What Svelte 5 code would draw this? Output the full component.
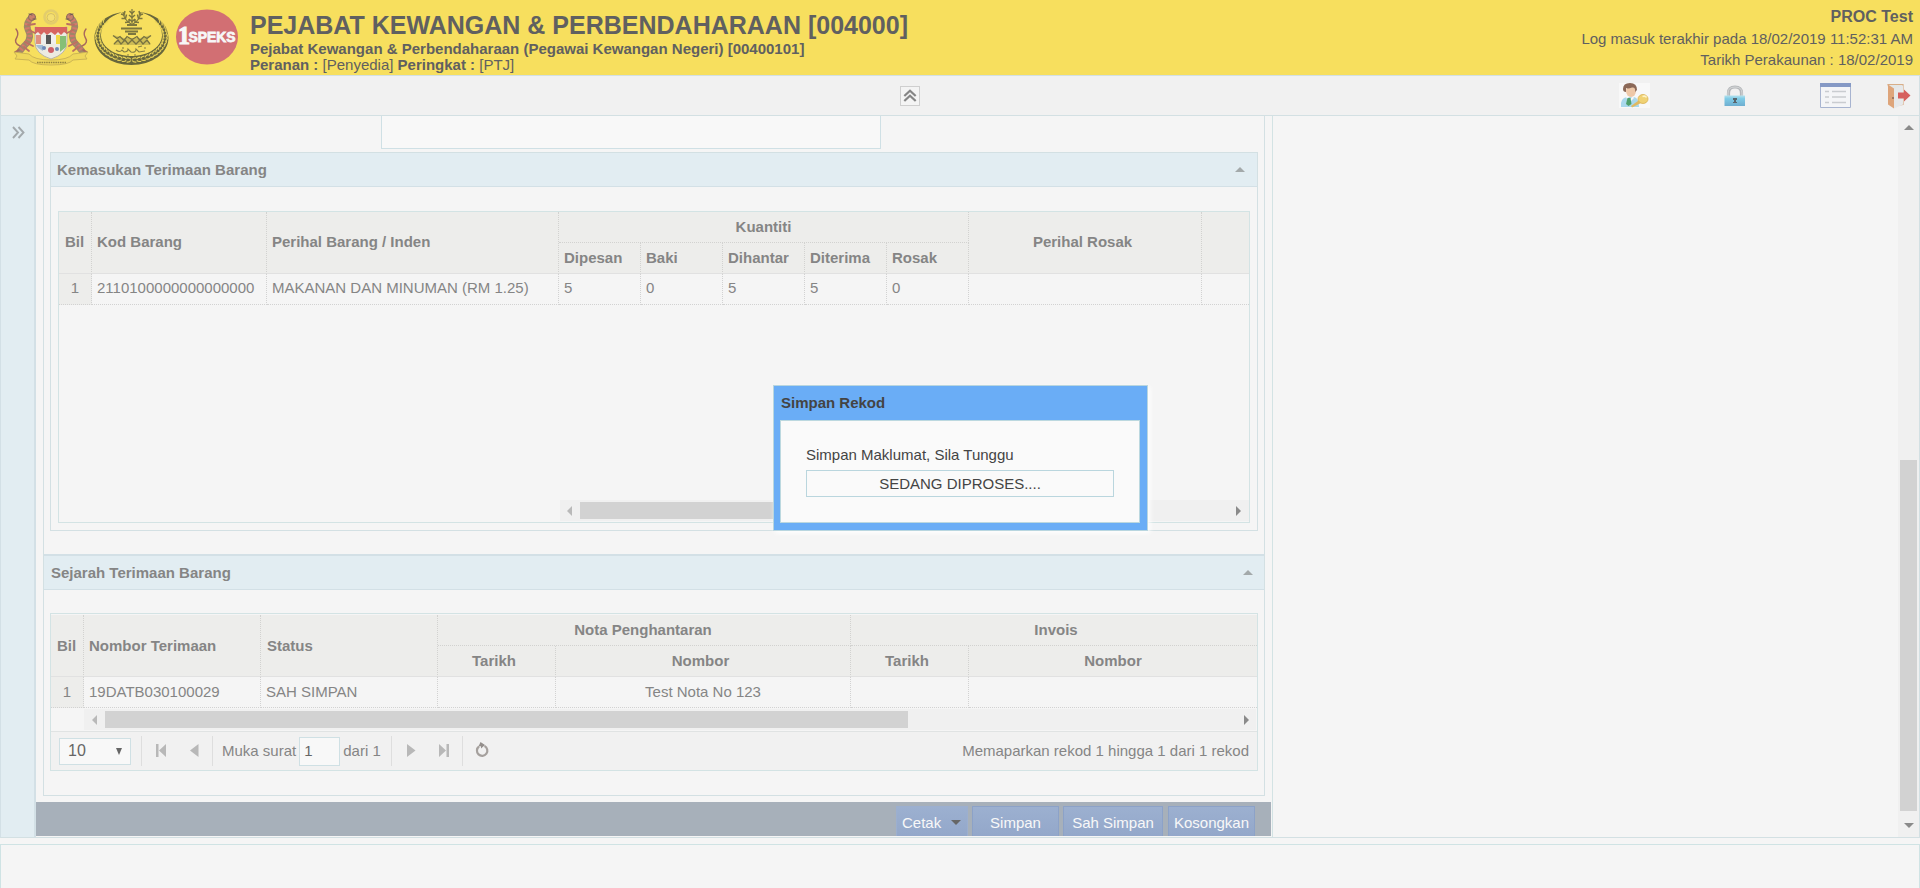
<script>
  const qty = ['Dipesan', 'Baki', 'Dihantar', 'Diterima', 'Rosak'];
  const qtyValues = ['5', '0', '5', '5', '0'];
  const sides = ['matrix(1 0 0 1 0 0)', 'matrix(-1 0 0 1 76 0)'];
  const leaves = Array.from({ length: 34 }, (_, i) => {
    const deg = -38 + (i * 256) / 33;
    const a = deg * (Math.PI / 180);
    return {
      x: 37.5 + 33.8 * Math.cos(a),
      y: 27.3 + 23.8 * Math.sin(a),
      r: deg + 90,
      flip: deg < 90 ? 1 : -1
    };
  });
</script>

<div class="page">
  <header>
    <div class="logos">
      <svg width="76" height="58" viewBox="0 0 76 58">
        <circle cx="38" cy="8" r="6.500" fill="none" stroke="#e3cd6c" stroke-width="2.600" />
        <circle cx="38" cy="8.500" r="4" fill="#f4df72" stroke="#cdb767" stroke-width=".8" />
        <path d="M22 18q16 4 32 0v15q0 12-16 17q-16-5-16-17z" fill="#ecebe2" stroke="#b9b5a5" />
        <path d="M22 18h32v7l-3-2-3 3-3-3-3 3-4-3-4 3-3-3-3 3-3-3-3 2z" fill="#d76560" />
        <path d="M23 26h5v9h-5z" fill="#e09080" /><path d="M29 26h4v9h-4z" fill="#eeeeec" />
        <path d="M33 26h5v9h-5z" fill="#575757" /><path d="M38 26h5v9h-5z" fill="#f0eeee" />
        <path d="M43 26h4v9h-4z" fill="#f1d944" /><path d="M47 27h6v11l-6 5z" fill="#86bf76" />
        <path d="M23 36h7v6l-5-3z" fill="#a5bdd4" /><circle cx="38" cy="41" r="3" fill="#ce6069" />
        <circle cx="44" cy="40" r="2" fill="#6d89b6" /><circle cx="31" cy="39" r="2" fill="#6d89b6" />
        {#each sides as side}
          <g fill="none" stroke-linecap="round" transform={side}>
            <path d="M19 8q-7 6-4 13q4 7-1 13q-4 4-7 8" stroke="#a08668" stroke-width="6.500" />
            <path d="M19 8q-7 6-4 13q4 7-1 13q-4 4-7 8" stroke="#d4796c" stroke-width="4.600" stroke-dasharray="1.800 2.200" stroke-linecap="butt" />
            <path d="M15 16l7-1M16 21l6 3M12 33l8 4M11 38l5 4" stroke="#bb7062" stroke-width="1.800" />
            <path d="M7 37q-7-3-3-9q2-4-1-8M2 43l4-2" stroke="#a8685c" stroke-width="1.400" />
            <circle cx="19" cy="8" r="3.500" fill="#c9806a" stroke="#8b6a5c" stroke-width=".9" />
            <path d="M16 5l3 1M20 10l3 0" stroke="#6b5a52" stroke-width="1" />
          </g>
        {/each}
        <path d="M1 43l15 2q5 6 22 6t22-6l15-2-3 4 2 3-14 1q-4 5-22 5t-22-5l-14-1 2-3z" fill="#efd75b" stroke="#c7b054" stroke-width=".9" />
        <path d="M24 53.500h29" stroke="#94843f" stroke-width="1.600" stroke-dasharray="1.500 .8" />
      </svg>
      <svg width="76" height="58" viewBox="0 0 76 58">
        <path
          d="M28 3.200C11 5.500.5 16 .5 29c0 15 16.500 27 37 27s37-12 37-27C74.500 16 64 5.500 47 3.200C60 7 68 15.500 68 26c0 11.500-13 21-30.500 21S7 37.500 7 26C7 15.500 15 7 28 3.200z"
          fill="#68673c"
        />
        {#each leaves as leaf}
          <path
            d="M-2.500-2.200Q.8-2.200 1.600-.4M-2.500 2Q.8 2.500 1.600 .8" fill="none" stroke="#e8d258" stroke-width="1.100"
            transform="translate({leaf.x} {leaf.y}) rotate({leaf.r}) scale({leaf.flip} 1)"
          />
        {/each}
        <g fill="none" stroke="#7d773f">
          <path d="M38 0v15M29 3q1 8 8 12M47 3q-1 8-8 12" stroke-width="1.200" />
          <path d="M35.500 2l2.500 2.500L40.500 2M35 6l3 2.500L41 6M35 10l3 2.500 3-2.500M27 5l3 1 1-4M27.500 9.500l4 0 1-4M49 5l-3 1-1-4M48.500 9.500l-4 0-1-4M31 13.500l4-.5v-3M45 13.500l-4-.5v-3" stroke-width="1.500" />
          <path d="M33 16h10M27 19.500h21M31 22.500h13M34 25h8" stroke-width="2" />
        </g>
        <path d="M19 26l5 5-5 5h38l-5-5 5-5-11 3H30z" fill="#cdbc55" />
        <path d="M19 26.500l4 3 3-2 4 4 3-4 5 3 5-3 3 4 4-4 3 2 4-3M20 35l4-4 3 4 4-4 3 4 4-4 4 4 4-4 3 4 4-4 3 4" fill="none" stroke="#777241" stroke-width="1.300" />
        <path d="M22 41q4 3 6 0l2 2q4 0 4-3l3 3q5 1 5-3l3 3 6-1M29 38v2M44 38l4-1M33 46h2M40 46h2M50 39h2" fill="none" stroke="#857e43" stroke-width="1.100" />
      </svg>
      <svg width="64" height="58" viewBox="0 0 64 58">
        <ellipse cx="31" cy="28" rx="31" ry="27.500" fill="#d26f73" />
        <path d="M3 22q4-1 5-4h3v14h2v3H3v-3h3v-9H3z" fill="#d26f73" />
        <text x="2" y="35" font-family="Liberation Serif" font-size="25" font-weight="bold" fill="#f7f7f7" stroke="#f7f7f7" stroke-width="1.200" textLength="12" lengthAdjust="spacingAndGlyphs">1</text>
        <text x="12.500" y="33" font-size="14" font-weight="bold" fill="#f7f7f7" stroke="#f7f7f7" stroke-width=".8" textLength="47" lengthAdjust="spacingAndGlyphs">SPEKS</text>
      </svg>
    </div>
    <div class="office">
      <h1>PEJABAT KEWANGAN &amp; PERBENDAHARAAN [004000]</h1>
      <div class="unit">Pejabat Kewangan &amp; Perbendaharaan (Pegawai Kewangan Negeri) [00400101]</div>
      <div class="role"><b>Peranan :</b> [Penyedia] <b>Peringkat :</b> [PTJ]</div>
    </div>
    <div class="session">
      <b>PROC Test</b>
      <span>Log masuk terakhir pada 18/02/2019 11:52:31 AM</span>
      <span>Tarikh Perakaunan : 18/02/2019</span>
    </div>
  </header>

  <nav>
    <button class="collapse" aria-label="Tutup">
      <svg width="18" height="18" viewBox="0 0 18 18"><path d="M3.300 9L9 3.800 14.700 9M3.300 14L9 8.800l5.700 5.200" fill="none" stroke="#858585" stroke-width="2.200" /></svg>
    </button>
    <div class="tools">
      <svg width="31" height="25" viewBox="0 0 31 25">
        <path d="M0 0h31v25H0z" fill="#f8f8f8" />
        <path d="M2 24q-1-9 6-10h7q5 1 5 10z" fill="#a9d8ec" /><path d="M8 13l3 3 3-3 1 2-3 3-5-3z" fill="#f8f8f8" />
        <path d="M8.500 15h3l1 6-3 2-2.500-2z" fill="#4fa06c" />
        <ellipse cx="12" cy="8" rx="5" ry="6" fill="#eec8a8" />
        <path d="M4 6Q4 0 11 0q7 0 7 7l-2 2q1-5-3-4.500Q9 6 7 5v4Q4 9 4 6z" fill="#8b6857" />
        <path d="M12 23l9-6.500 3 2.500-7 3.500-4 2z" fill="#e0b962" />
        <ellipse cx="24" cy="16" rx="5" ry="4.500" fill="#f0d274" stroke="#d9b354" stroke-width=".8" />
        <path d="M23.500 13.500q3-1 4 1" stroke="#fff3c4" stroke-width="1.600" fill="none" />
      </svg>
      <svg width="22" height="22" viewBox="0 0 22 22">
        <path d="M4.500 11V8q0-6 6.500-6t6.500 6v3" fill="none" stroke="#b4b7ba" stroke-width="3.200" />
        <path d="M4 11V8q0-6 7-6t7 6v3" fill="none" stroke="#d6d8d9" stroke-width="1" />
        <defs><linearGradient id="lock" x2="0" y2="1"><stop stop-color="#b4e2ee" /><stop offset=".3" stop-color="#7fcbe6" /><stop offset="1" stop-color="#6eaed0" /></linearGradient></defs>
        <rect x=".5" y="10.500" width="20.500" height="10.500" fill="url(#lock)" /><path d="M9 13h4v2h-1v2h1v1H9v-1h1v-2H9z" fill="#59666d" />
      </svg>
      <svg width="31" height="25" viewBox="0 0 31 25">
        <path d="M.5.5h30v24H.5z" fill="#f4f5f7" stroke="#a8b4d0" /><path d="M0 0h31v4H0z" fill="#8599c5" />
        <path d="M5 8.500h4M12 8.500h14M5 14h4M12 14h14M5 19.500h4M12 19.500h14" stroke="#c9ccd0" stroke-width="1.500" />
      </svg>
      <svg width="25" height="25" viewBox="0 0 25 25">
        <path d="M1 .5h15v20l-9 1z" fill="#e4e7e6" stroke="#d8ae88" stroke-width="1.200" />
        <path d="M1 .5l6 4v20l-6-4z" fill="#dea57b" /><path d="M7 4.500l9-3v19l-9 4z" fill="#e6e8ea" /><circle cx="6" cy="14" r="1" fill="#8a6958" />
        <path d="M11 8.500h6V5.500l6.500 6-6.500 6v-3h-6z" fill="#d6605e" />
      </svg>
    </div>
  </nav>

  <main>
    <aside><svg width="14" height="15" viewBox="0 0 14 15"><path d="M1 2l5 5.500-5 5.500M6.500 2l5 5.500-5 5.500" fill="none" stroke="#a3a9ac" stroke-width="1.900" /></svg></aside>
    <section class="pane">
      <div class="form">
        <div class="field"></div>
        <div class="panel">
          <h2><span>Kemasukan Terimaan Barang</span><i class="tri up"></i></h2>
          <div class="panel-body">
            <div class="grid first">
              <b class="tall mid k">Bil</b><b class="tall">Kod Barang</b><b class="tall">Perihal Barang / Inden</b>
              <b class="group mid">Kuantiti</b><b class="tall mid shift">Perihal Rosak</b><b class="tall last"></b>
              {#each qty as q}<b class="sub">{q}</b>{/each}
              <span class="num">1</span><span class="code">2110100000000000000</span><span>MAKANAN DAN MINUMAN (RM 1.25)</span>
              {#each qtyValues as v}<span>{v}</span>{/each}
              <span></span><span class="last"></span>
            </div>
            <div class="hscroll one"><i class="tri left"></i><div class="thumb"></div><i class="tri right"></i></div>
          </div>
        </div>

        <div class="history">
          <h2><span>Sejarah Terimaan Barang</span><i class="tri up"></i></h2>
          <div class="table-two">
            <div class="grid second">
              <b class="tall mid k">Bil</b><b class="tall">Nombor Terimaan</b><b class="tall status">Status</b>
              <b class="pair mid nota">Nota Penghantaran</b><b class="pair mid last invois">Invois</b>
              <b class="mid shift">Tarikh</b><b class="mid shift">Nombor</b><b class="mid shift">Tarikh</b><b class="mid last">Nombor</b>
              <span class="num">1</span><span>19DATB030100029</span><span>SAH SIMPAN</span><span></span>
              <span class="mid">Test Nota No 123</span><span></span><span class="last"></span>
            </div>
            <div class="hscroll two"><i class="tri left"></i><div class="thumb"></div><i class="tri right"></i></div>
            <div class="pager">
              <div class="select"><span>10</span><i class="tri down"></i></div>
              <div class="turn back">
                <svg width="12" height="14" viewBox="0 0 12 14"><path d="M1 0h2.500v13H1zM11 0v13L4 6.500z" fill="#b8b8b8" /></svg>
                <svg width="9" height="14" viewBox="0 0 9 14"><path d="M8.500 0v13L0 6.500z" fill="#b8b8b8" /></svg>
              </div>
              <div class="pageno"><span>Muka surat</span><div class="box">1</div><span>dari 1</span></div>
              <div class="turn fwd">
                <svg width="9" height="14" viewBox="0 0 9 14"><path d="M0 0v13l8.500-6.500z" fill="#b8b8b8" /></svg>
                <svg width="12" height="14" viewBox="0 0 12 14"><path d="M8.500 0H11v13H8.500zM1 0v13l7-6.500z" fill="#b8b8b8" /></svg>
              </div>
              <div class="refresh"><svg width="15" height="16" viewBox="0 0 15 16"><path d="M4 4.500A5.200 5.200 0 1 0 9.500 4" fill="none" stroke="#a5a09d" stroke-width="2.200" /><path d="M5.500 0l4.500 3-4 3.500V4.200L3.500 4.500z" fill="#948f8c" /></svg></div>
              <div class="summary">Memaparkan rekod 1 hingga 1 dari 1 rekod</div>
            </div>
          </div>
        </div>
      </div>
      <div class="actions">
        <button class="print">Cetak<i class="tri down"></i></button>
        <button class="save">Simpan</button>
        <button class="confirm">Sah Simpan</button>
        <button class="clear">Kosongkan</button>
      </div>
    </section>
    <div class="vscroll"><i class="tri up"></i><div class="bar"></div><i class="tri down"></i></div>
  </main>
  <footer></footer>

  <div class="dialog">
    <h3>Simpan Rekod</h3>
    <div class="dialog-body">
      <p>Simpan Maklumat, Sila Tunggu</p>
      <div class="progress">SEDANG DIPROSES....</div>
    </div>
  </div>
</div>

<style>
  :global(body) { background: #f5f5f5; overflow: hidden; }
  * { box-sizing: border-box; }
  .page { width: 1920px; height: 888px; display: flex; flex-direction: column; position: relative; background: #f5f5f5; color: #858585; font: 15px "Liberation Sans", Arial, sans-serif; }
  h1, h2, h3, p { margin: 0; }
  svg { display: block; flex: none; }
  button { font: inherit; }

  header { height: 75px; flex: none; display: flex; background: #f7df5e; color: #606060; }
  .logos { display: flex; gap: 5px; width: 250px; padding: 9px 0 0 13px; flex: none; }
  .logos svg:nth-child(3) { margin-left: 1px; }
  .office { padding-top: 12px; white-space: nowrap; }
  h1 { font-size: 25px; line-height: 26px; }
  .unit { font-weight: bold; line-height: 20px; margin-top: 1px; }
  .role { line-height: 16px; margin-top: -2px; }
  .session { margin-left: auto; padding: 6px 7px 0 0; text-align: right; display: flex; flex-direction: column; }
  .session b { font-size: 16px; line-height: 21px; }
  .session span { line-height: 21px; padding-top: 1px; height: 21px; }

  nav { height: 41px; flex: none; background: #f1f1f1; border: 1px solid #d3e0e3; display: flex; align-items: center; padding-left: 899px; }
  .collapse { width: 20px; height: 20px; padding: 0; border: 1px solid #cfcfcf; background: #f4f4f4; }
  .tools { margin-left: auto; display: flex; align-items: center; padding-right: 7px; }
  .tools svg:nth-child(2) { margin-left: 74px; }
  .tools svg:nth-child(3) { margin-left: 74px; }
  .tools svg:nth-child(4) { margin-left: 36px; margin-top: 2px; }

  main { height: 722px; flex: none; display: flex; border-bottom: 1px solid #d3e0e3; border-right: 1px solid #d3e0e3; overflow: hidden; }
  aside { width: 36px; background: #e2edf2; border-left: 1px solid #d3e0e6; border-right: 2px solid #d3e0e6; padding: 9px 0 0 11px; }
  .pane { width: 1237px; border-right: 1px solid #d3e3e4; display: flex; flex-direction: column; }
  .form { width: 1222px; height: 680px; margin-left: 7px; border: 1px solid #d3e0e3; border-top: 0; flex: none; }
  .field { width: 500px; height: 33px; margin-left: 337px; background: #f8f8f8; border: 1px solid #cfe0e5; border-top: 0; }
  .panel { width: 1208px; height: 379px; margin: 3px 0 0 6px; border: 1px solid #d3e0e3; }
  h2 { font-size: 15px; height: 34px; display: flex; align-items: center; justify-content: space-between; background: #e2edf2; border-bottom: 1px solid #d3e0e6; padding: 0 12px 0 6px; }
  .panel-body { width: 1192px; height: 312px; margin: 24px 0 0 7px; border: 1px solid #d3e3e4; display: flex; flex-direction: column; justify-content: space-between; }

  .grid { display: grid; }
  .grid b { background: #ededeb; display: flex; align-items: center; padding-left: 5px; border-right: 1px dotted #d2d2d0; border-bottom: 1px dotted #d2d2d0; }
  .grid b.tall { grid-row: span 2; border-bottom: 1px solid #e1e1e1; }
  .grid .mid { justify-content: center; padding: 0; }
  .grid .mid.k { padding-right: 1px; }
  .grid .shift { padding-right: 5px; }
  .grid span { display: flex; align-items: center; padding: 0 0 1px 5px; border-right: 1px dotted #d2d2d2; border-bottom: 1px dotted #d2d2d2; white-space: nowrap; }
  .grid span.num { background: #ededeb; justify-content: center; padding-left: 0; }
  .grid span.mid { padding-left: 0; }
  .grid .last { border-right: 0; }
  .first { grid-template: 31px 31px 31px / 33px 175px 292px 82px 82px 82px 82px 82px 233px 47px; }
  .first b { padding-bottom: 2px; }
  .first .mid { padding-bottom: 2px; }
  .first span, .first span.num { padding-bottom: 3px; }
  .first .group { grid-column: span 5; }
  .first .sub { border-bottom: 1px solid #e1e1e1; }
  .second { grid-template: 31px 31px 31px / 33px 177px 177px 118px 295px 118px 288px; margin-right: 1px; }
  .second .pair { grid-column: span 2; }
  .second .status { padding-left: 6px; }
  .second .nota { padding-right: 2px; }
  .second .invois { padding-left: 4px; }
  .second b { padding-bottom: 1px; }
  .second .mid { padding-bottom: 1px; }
  .second span, .second span.num { padding-bottom: 2px; }
  .second b:nth-child(n + 6) { border-bottom: 1px solid #e1e1e1; }

  .tri { display: block; flex: none; width: 0; height: 0; border: 5px solid transparent; }
  .tri.up { border-top: 0; border-bottom-color: #a3a9aa; }
  .tri.down { border-bottom: 0; border-top-color: #666; }
  .tri.left { border-left: 0; border-right-color: #b9b9b9; }
  .tri.right { border-right: 0; border-left-color: #8a8a8a; }
  .hscroll { height: 21px; background: #f0f0f0; display: flex; align-items: center; }
  .hscroll .left { margin-left: 7px; }
  .hscroll .right { margin: 0 8px 0 auto; }
  .hscroll .thumb { height: 17px; background: #d2d2d2; margin-left: 9px; }
  .one { margin: 0 0 1px 501px; }
  .one .thumb { width: 350px; margin-left: 8px; }
  .two { margin: 1px 1px 1px 33px; }
  .hscroll.two .left { margin-left: 8px; }
  .hscroll.two .thumb { width: 803px; margin-left: 8px; }
  .hscroll.two .right { margin-right: 7px; }

  .history { margin-top: 23px; }
  .history h2 { height: 36px; border-top: 2px solid #d3e0e6; padding: 0 11px 0 7px; }
  .table-two { width: 1208px; height: 158px; margin: 23px 0 0 6px; padding-top: 1px; border: 1px solid #d3e3e4; }
  .pager { height: 39px; background: #f1f1f1; border-top: 1px solid #e0e3e3; display: flex; align-items: center; padding: 0 8px; }
  .pager > div { flex: none; }
  .select { width: 72px; height: 27px; border: 1px solid #cfe0e4; background: #f8f8f8; display: flex; align-items: center; justify-content: space-between; padding: 0 8px 0 8px; color: #666; font-size: 16px; }
  .select .tri { border-width: 7px 3.5px 0; }
  .turn { height: 30px; display: flex; align-items: center; }
  .back { margin-left: 10px; border-left: 1px solid #dedede; padding-left: 13px; gap: 23px; width: 71px; }
  .pageno { height: 30px; border: solid #dedede; border-width: 0 1px; display: flex; align-items: center; padding-left: 9px; width: 180px; white-space: nowrap; }
  .pageno span, .summary { padding-bottom: 2px; }
  .box { width: 41px; height: 29px; border: 1px solid #cfe0e4; background: #f8f8f8; color: #666; padding: 4px 0 0 4px; margin: 0 3px 0 3px; }
  .fwd { padding-left: 15px; gap: 22px; width: 70px; }
  .refresh { height: 30px; border-left: 1px solid #dedede; display: flex; align-items: center; padding: 0 0 2px 12px; }
  .summary { margin-left: auto; white-space: nowrap; }

  .actions { height: 34px; width: 1235px; margin-top: 6px; background: #a7b0ba; flex: none; display: flex; padding: 4px 16px 0 0; justify-content: flex-end; overflow: hidden; }
  .actions button { height: 35px; flex: none; padding: 0 0 3px; border: 1px solid #8ca2c8; background: linear-gradient(#9cb0d0, #92a6c9); color: #f8f8f8; white-space: nowrap; }
  .actions .print { width: 72px; margin-right: 4px; border-color: #9cafcf; display: flex; align-items: center; padding: 0 6px 3px 5px; justify-content: space-between; }
  .save { width: 87px; margin-right: 4px; }
  .confirm { width: 100px; margin-right: 5px; }
  .clear { width: 87px; }

  .vscroll { width: 21px; margin-left: auto; background: #f0f0f0; display: flex; flex-direction: column; align-items: center; padding: 9px 0 9px; }
  .vscroll .tri { border-left-width: 5px; }
  .vscroll .up { border-bottom-color: #8a8a8a; }
  .vscroll .down { border-top-color: #8a8a8a; margin-top: auto; }
  .bar { width: 17px; height: 351px; margin-top: 330px; background: #d2d2d2; }
  footer { height: 44px; margin-top: 6px; flex: none; border: 1px solid #cfe3e4; border-bottom: 0; }

  .dialog { position: absolute; left: 773px; top: 385px; width: 375px; height: 146px; background: #6aadf6; border: 1px solid #b9d6df; box-shadow: 2px 2px 5px #fff; color: #444; padding: 0 7px; }
  h3 { font-size: 15px; line-height: 34px; }
  .dialog-body { height: 103px; margin-left: -1px; background: #fafafa; border: 1px solid #bcd8df; padding: 22px 25px 0; }
  p { line-height: 24px; }
  .progress { height: 27px; margin-top: 3px; border: 1px solid #bad6de; line-height: 25px; text-align: center; }
</style>
